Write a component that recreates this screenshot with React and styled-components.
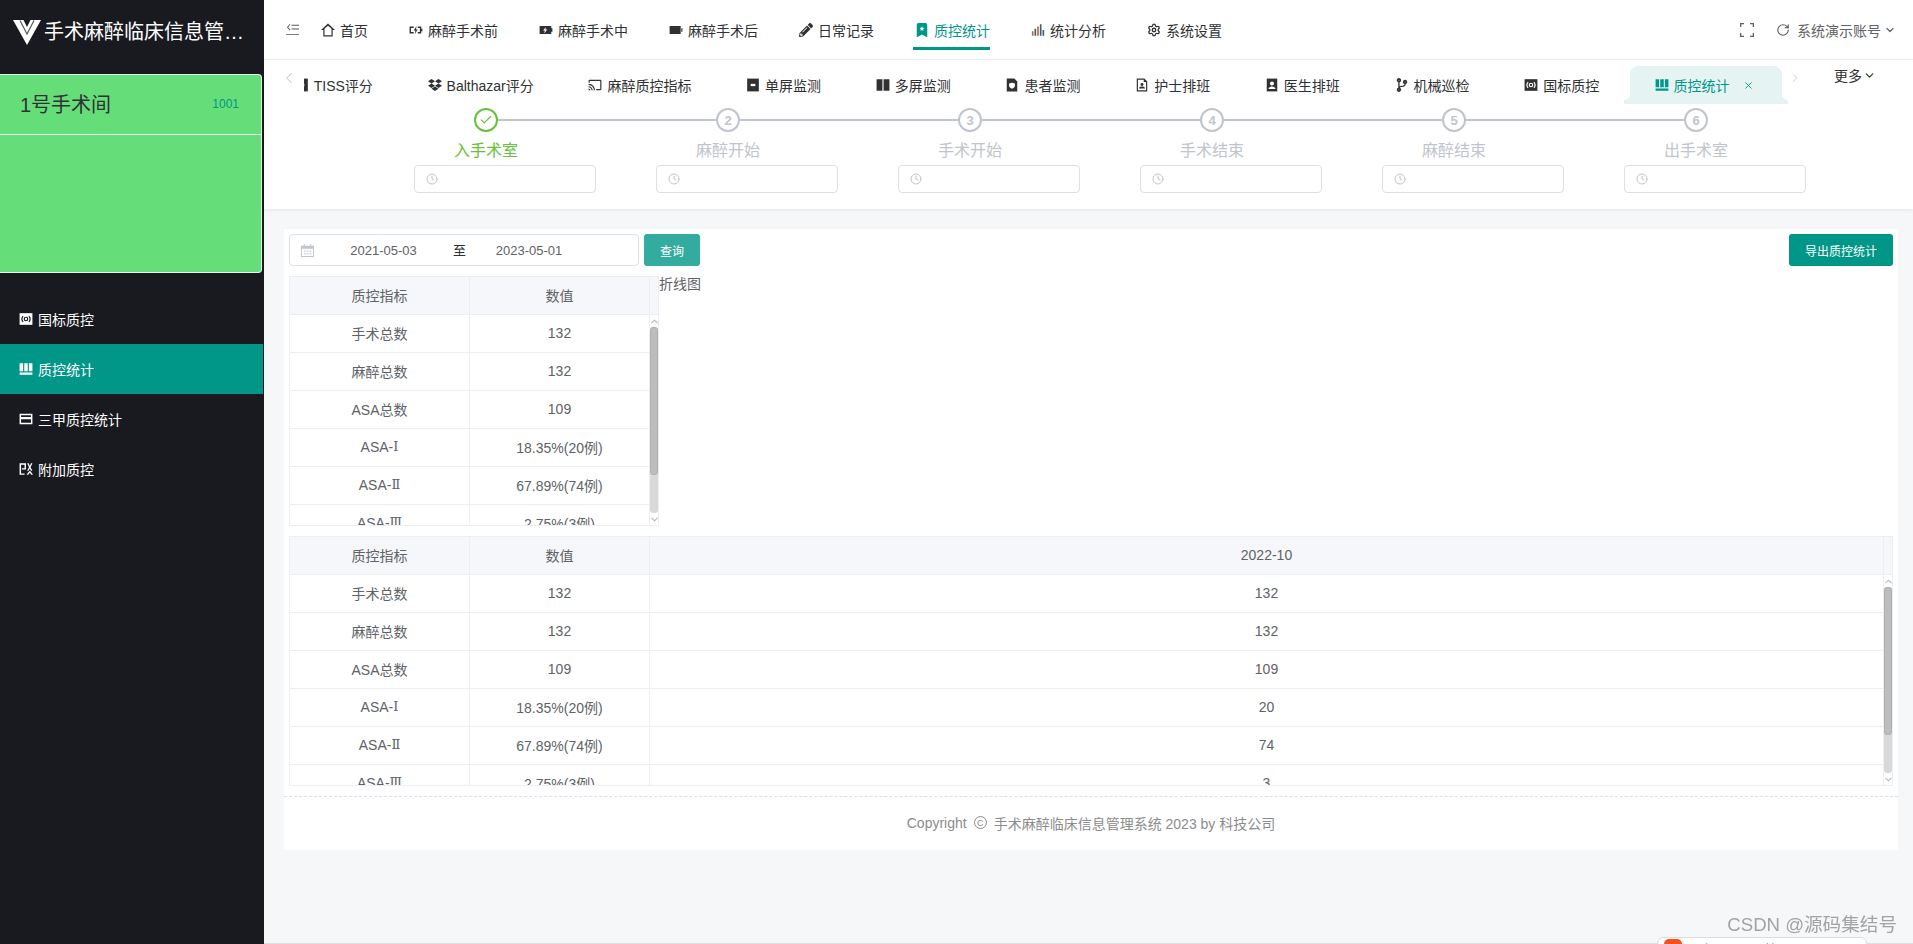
import React from "react";
import styled, { createGlobalStyle } from "styled-components";
import { MdCast } from "react-icons/md";
import { FaDropbox, FaCodeBranch, FaPencilAlt } from "react-icons/fa";
import { BsBookmarkStarFill } from "react-icons/bs";
import { Check, ChevronDown, ChevronLeft, ChevronRight, ChevronUp, Clock, RotateCw, Settings, X } from "lucide-react";

const GlobalStyle = createGlobalStyle`
  html, body {
    margin: 0;
    height: 100%;
    overflow: hidden;
    font-family: "Liberation Sans", "Noto Sans CJK SC", sans-serif;
    font-size: 14px;
    color: #303133;
  }
`;

const Svg = styled.svg`
  width: ${(p) => p.$size || 14}px;
  height: ${(p) => p.$size || 14}px;
  flex: none;
  fill: currentColor;
`;

const HomeLine = () => (
  <Svg viewBox="0 0 24 24">
    <path fillRule="evenodd" d="M12 1L0 12h4v11h16V12h4zM12 4.500l6 5.500v11H6V10z" />
  </Svg>
);
const BatteryLine = () => (
  <Svg viewBox="0 0 24 24">
    <path d="M1 6h7v2.400H3.400v7.200H8V18H1zM15 6h6v4h2v4h-2v4h-6v-2.400h3.600V8.400H15z" />
    <path d="M13 5l-5 8h3l-1 6 5-8h-3z" />
  </Svg>
);
const BatteryFill = () => (
  <Svg viewBox="0 0 24 24">
    <path d="M1 5h20v4h2v6h-2v4H1z" />
    <path fill="#fff" d="M12 7l-5 6h3l-1 5 5-7h-3z" />
  </Svg>
);
const VideoBar = () => (
  <Svg viewBox="0 0 24 24">
    <path d="M1 5h19v14H1zM21 9h2v6h-2z" />
  </Svg>
);
const BarsChart = () => (
  <Svg viewBox="0 0 24 24">
    <path fill="#a8733a" d="M1.500 14h2.800v8H1.500zM10.600 6h2.800v16h-2.800z" />
    <path fill="#3f5b78" d="M6 10h2.800v12H6zM15.200 2h2.800v20h-2.800zM19.800 12h2.800v10h-2.800z" />
  </Svg>
);
const Collapse = () => (
  <Svg viewBox="0 0 14 14" $size={13}>
    <path d="M0 12h14v1H0zM6 2h8v1H6zM6 6h8v1H6zM4 1L1 4.500 4 8l.7-.6L2.300 4.500 4.700 1.600z" />
  </Svg>
);
const Corners = () => (
  <Svg viewBox="0 0 14 14" $size={14}>
    <path d="M0 0h4v1.300H1.300V4H0zM10 0h4v4h-1.300V1.300H10zM0 10h1.300v2.700H4V14H0zM12.700 10H14v4h-4v-1.300h2.700z" />
  </Svg>
);
const DocFill = () => (
  <Svg viewBox="0 0 24 24">
    <path d="M2 1h20v22H2z" />
    <path fill="#fff" d="M8 10h8v4H8z" />
  </Svg>
);
const BookFill = () => (
  <Svg viewBox="0 0 24 24">
    <path d="M1 2h10v20H1zM13 2h10v20H13z" />
  </Svg>
);
const ShieldDoc = () => (
  <Svg viewBox="0 0 24 24">
    <path d="M3 1h13l5 5v17H3z" />
    <path fill="#fff" d="M12 8l5 1.500v3.500c0 3-2.500 4.500-5 5.500-2.500-1-5-2.500-5-5.500V9.500z" />
  </Svg>
);
const PersonDoc = () => (
  <Svg viewBox="0 0 24 24">
    <path d="M3 1h13l5 5v17H3zm2 2v18h14V7h-4V3z" />
    <circle cx="12" cy="11" r="2.500" />
    <path d="M7 18c0-2.500 2.500-3.500 5-3.500s5 1 5 3.500z" />
  </Svg>
);
const PersonFill = () => (
  <Svg viewBox="0 0 24 24">
    <path d="M3 1h18v22H3z" />
    <circle fill="#fff" cx="12" cy="9.500" r="3.500" />
    <path fill="#fff" d="M6 19c0-3 3-4.500 6-4.500s6 1.500 6 4.500z" />
  </Svg>
);
const RadioFill = ({ inner = "#fff" }) => (
  <Svg viewBox="0 0 24 24">
    <path d="M1 2h22v20H1z" />
    <circle cx="12" cy="12" r="3" fill="none" stroke={inner} strokeWidth="2" />
    <path fill="none" stroke={inner} strokeWidth="2" d="M7 7c-2.500 3-2.500 7 0 10M17 7c2.500 3 2.500 7 0 10" />
  </Svg>
);
const WeekBars = () => (
  <Svg viewBox="0 0 24 24">
    <path d="M1 2h6v14H1zM9 2h6v14H9zM17 2h6v14h-6zM1 18h22v4H1z" />
  </Svg>
);
const CardLine = () => (
  <Svg viewBox="0 0 24 24">
    <path d="M1 3h22v18H1zm2.500 2.500v3h17v-3zm0 7v6h17v-6z" />
  </Svg>
);
const ExtraMark = () => (
  <Svg viewBox="0 0 24 24">
    <path d="M1 2h11v11H5v-2.500h4.500v-6h-6v15h6V22H1zM14 2h2.500l2 5 2-5H23l-3.200 7 3.200 6h-2.500l-2-4-2 4H14l3.200-6zM13 22l4.200-6h2.600L24 22h-2.800l-2.700-3.500-2.700 3.500z" />
  </Svg>
);
const CalendarMark = () => (
  <Svg viewBox="0 0 14 14" $size={13}>
    <path d="M3 0h1v2h6V0h1v2h3v12H0V2h3zM1 5v8h12V5zM3 7h2v1H3zM6 7h2v1H6zM9 7h2v1H9zM3 10h2v1H3zM6 10h2v1H6zM9 10h2v1H9z" />
  </Svg>
);
const LogoMark = () => (
  <svg width="28" height="25" viewBox="0 0 28 25">
    <polygon fill="#fff" points="0,0 28,0 14,25" />
    <polyline fill="none" stroke="#55565c" strokeWidth="1.2" points="7,0.500 14,14 21,0.500" />
    <polygon fill="#191a20" points="10.500,0 17.500,0 14,7" />
  </svg>
);

const Page = styled.div`
  display: flex;
  height: 100vh;
  overflow: hidden;
`;

const Sidebar = styled.aside`
  width: 264px;
  flex: none;
  background: #191a20;
`;

const Brand = styled.div`
  height: 74px;
  box-sizing: border-box;
  padding: 20px 0 0 13px;
  display: flex;
  align-items: flex-start;
  gap: 3px;
`;

const BrandTitle = styled.div`
  width: 203px;
  font-size: 20px;
  line-height: 24px;
  color: #fff;
  white-space: nowrap;
  overflow: hidden;
  text-overflow: ellipsis;
`;

const RoomCard = styled.div`
  width: 262px;
  height: 199px;
  box-sizing: border-box;
  background: #65de7a;
  border: 1px solid #e8f5ea;
  border-left: none;
  border-radius: 0 4px 4px 0;
`;

const RoomHead = styled.div`
  height: 60px;
  box-sizing: border-box;
  padding: 0 22px 2px 20px;
  border-bottom: 1px solid #e8f5ea;
  display: flex;
  align-items: center;
  justify-content: space-between;
`;

const RoomName = styled.span`
  font-size: 20px;
  color: #303133;
`;

const RoomCode = styled.span`
  font-size: 12px;
  color: #009688;
`;

const SideMenu = styled.nav`
  margin-top: 21px;
`;

const SideItem = styled.div`
  height: 50px;
  margin-right: 1px;
  padding-left: 19px;
  display: flex;
  align-items: center;
  gap: 5px;
  color: #fff;
  background: ${(p) => (p.$active ? "#009688" : "transparent")};
`;

const Content = styled.div`
  flex: 1;
  min-width: 0;
  display: flex;
  flex-direction: column;
  background: #f6f7f9;
  border-bottom: 1px solid #dedede;
`;

const TopBar = styled.header`
  height: 60px;
  box-sizing: border-box;
  flex: none;
  background: #fff;
  border-bottom: 1px solid #f0f0f0;
  padding: 0 17px 0 22px;
  display: flex;
  align-items: flex-start;
`;

const CollapseButton = styled.div`
  height: 50px;
  width: 33px;
  display: flex;
  align-items: center;
  padding-top: 9px;
  box-sizing: border-box;
  color: #555;
`;

const NavList = styled.nav`
  display: flex;
  gap: 39px;
  flex: 1;
`;

const NavItem = styled.div`
  height: 50px;
  box-sizing: border-box;
  padding: 13px 0 0 2px;
  border-bottom: 3px solid ${(p) => (p.$active ? "#009688" : "transparent")};
  display: flex;
  align-items: center;
  gap: 5px;
  color: ${(p) => (p.$active ? "#009688" : "#303133")};
`;

const UserArea = styled.div`
  height: 60px;
  display: flex;
  align-items: center;
  color: #606266;
`;

const AccountName = styled.span`
  margin: 0 3px 0 7px;
`;

const UserGap = styled.span`
  width: 22px;
`;

const TabsPanel = styled.section`
  flex: none;
  background: #fff;
  box-shadow: 0 1px 4px rgba(0, 21, 41, 0.08);
`;

const TabsRow = styled.div`
  height: 44px;
  display: flex;
  align-items: flex-start;
  padding-left: 20px;
`;

const TabArrow = styled.div`
  width: ${(p) => p.$width}px;
  flex: none;
  margin-top: 9px;
  color: #a8abb2;
  display: flex;
  justify-content: ${(p) => p.$justify};
`;

const TabViewport = styled.div`
  width: 1484px;
  height: 44px;
  flex: none;
  overflow: hidden;
`;

const TabTrack = styled.div`
  display: flex;
  padding-top: 6px;
  margin-left: -36.600px;
`;

const Tab = styled.div`
  height: 38px;
  flex: none;
  padding: 0 27.350px;
  display: flex;
  align-items: center;
  gap: 5px;
  white-space: nowrap;
  color: #303133;
`;

const ActiveTab = styled(Tab)`
  position: relative;
  margin-left: 3px;
  padding: 0 28px 0 25px;
  color: #009688;
  background: #e5f4f3;
  border-radius: 8px 8px 0 0;
  &::before,
  &::after {
    content: "";
    position: absolute;
    bottom: 0;
    width: 6px;
    height: 10px;
  }
  &::before {
    left: -6px;
    background: radial-gradient(circle at 0 0, transparent 6px, #e5f4f3 6.500px);
  }
  &::after {
    right: -6px;
    background: radial-gradient(circle at 100% 0, transparent 6px, #e5f4f3 6.500px);
  }
`;

const TabClose = styled.span`
  display: flex;
  margin-left: 8px;
`;

const MoreMenu = styled.div`
  margin: 5px 0 0 32px;
  display: flex;
  align-items: center;
  gap: 1px;
  color: #303133;
`;

const Steps = styled.div`
  display: flex;
  padding: 4px 0 16px 101px;
`;

const Step = styled.div`
  width: 242px;
  flex: none;
  display: flex;
  flex-direction: column;
  align-items: center;
`;

const StepHead = styled.div`
  width: 100%;
  display: flex;
  align-items: center;
`;

const StepLine = styled.div`
  flex: 1;
  height: 2px;
  background: ${(p) => (p.$hidden ? "transparent" : "#c0c4cc")};
`;

const StepCircle = styled.div`
  width: 24px;
  height: 24px;
  box-sizing: border-box;
  border: 2px solid ${(p) => (p.$done ? "#67c23a" : "#c0c4cc")};
  border-radius: 50%;
  color: ${(p) => (p.$done ? "#67c23a" : "#c0c4cc")};
  display: flex;
  align-items: center;
  justify-content: center;
  font-size: 13px;
  font-weight: 700;
`;

const StepLabel = styled.div`
  margin-top: 7px;
  font-size: 16px;
  line-height: 24px;
  color: ${(p) => (p.$done ? "#67c23a" : "#c0c4cc")};
`;

const TimeInput = styled.div`
  width: 182px;
  height: 28px;
  box-sizing: border-box;
  margin: 2px 0 0 48.500px;
  align-self: flex-start;
  padding-left: 11px;
  border: 1px solid #dcdfe6;
  border-radius: 4px;
  display: flex;
  align-items: center;
  color: #c0c4cc;
`;

const MainCard = styled.main`
  margin: 20px 15px 0 20px;
  height: 621px;
  box-sizing: border-box;
  background: #fff;
  padding: 5px 5px 0;
`;

const Toolbar = styled.div`
  display: flex;
  align-items: center;
  justify-content: space-between;
  height: 32px;
`;

const QueryGroup = styled.div`
  display: flex;
  gap: 5px;
`;

const DateRange = styled.div`
  width: 350px;
  height: 32px;
  box-sizing: border-box;
  border: 1px solid #dcdfe6;
  border-radius: 4px;
  padding-left: 11px;
  display: flex;
  align-items: center;
  color: #c0c4cc;
`;

const DateValue = styled.span`
  width: ${(p) => p.$width}px;
  text-align: center;
  font-size: 13px;
  color: #606266;
`;

const DateSeparator = styled.span`
  font-size: 13px;
  margin-top: -2px;
  color: #303133;
`;

const FilledButton = styled.button`
  height: 32px;
  padding: 0 ${(p) => p.$pad}px;
  border: none;
  border-radius: 3px;
  background: ${(p) => (p.$soft ? "#33ab9f" : "#009688")};
  color: #fff;
  font: inherit;
  font-size: 12px;
`;

const TableRow = styled.div`
  display: flex;
  margin-top: 10px;
  height: 250px;
`;

const ChartTitle = styled.div`
  line-height: 16px;
  color: #606266;
`;

const TableBox = styled.div`
  flex: none;
  width: ${(p) => p.$width}px;
  height: 250px;
  box-sizing: border-box;
  border: 1px solid #ebeef5;
  overflow: hidden;
  color: #606266;
`;

const TableLine = styled.div`
  display: grid;
  grid-template-columns: ${(p) => p.$cols};
  height: 38px;
  background: ${(p) => (p.$head ? "#f5f7fa" : "#fff")};
`;

const TableCell = styled.div`
  box-sizing: border-box;
  padding-bottom: 2px;
  display: flex;
  align-items: center;
  justify-content: center;
  border-right: 1px solid #ebeef5;
  border-bottom: 1px solid #ebeef5;
  white-space: nowrap;
`;

const TableHeadEnd = styled.div`
  border-bottom: 1px solid #ebeef5;
`;

const TableBody = styled.div`
  display: flex;
  height: 210px;
`;

const TableRows = styled.div`
  flex: 1;
  min-width: 0;
  overflow: hidden;
`;

const ScrollGutter = styled.div`
  width: 8px;
  flex: none;
  display: flex;
  flex-direction: column;
  align-items: center;
  color: #bbb;
`;

const ScrollArrow = styled.div`
  height: 12px;
  display: flex;
  align-items: center;
`;

const ScrollTrack = styled.div`
  height: 186px;
  width: 100%;
  background: #d9d9d9;
  border-radius: 3px;
`;

const ScrollThumb = styled.div`
  height: 148px;
  box-sizing: border-box;
  background: #bdbdbd;
  border: 1px solid #b0b0b0;
  border-radius: 3px;
`;

const RomanNumeral = styled.span`
  font-family: "DejaVu Serif", "Noto Sans CJK SC", serif;
  font-size: 13px;
`;

const FooterBar = styled.footer`
  margin: 10px -5px 0;
  border-top: 1px dashed #dcdfe6;
  height: 54px;
  box-sizing: border-box;
  padding-bottom: 2px;
  display: flex;
  align-items: center;
  justify-content: center;
  gap: 4px;
  color: #8c8c8c;
`;

const CopyMark = styled.span`
  width: 11px;
  height: 11px;
  border: 1px solid #8c8c8c;
  border-radius: 50%;
  display: flex;
  align-items: center;
  justify-content: center;
  font-size: 9px;
  margin: 0 3px;
`;

const Watermark = styled.div`
  position: fixed;
  right: 16px;
  bottom: 7px;
  font-size: 18.600px;
  line-height: 24px;
  color: #a3a3a3;
`;

const ToolbarPopup = styled.div`
  position: fixed;
  left: 1657px;
  top: 937px;
  width: 210px;
  height: 30px;
  box-sizing: border-box;
  background: #fff;
  border: 1px solid #dcdcdc;
  border-radius: 6px;
  padding: 1px 6px;
  display: flex;
  gap: 18px;
  font-size: 14px;
  color: #4a9de0;
`;

const PopupLogo = styled.span`
  width: 18px;
  height: 18px;
  border-radius: 5px;
  background: #f4511e;
`;

const navItems = [
  [<HomeLine />, "首页"],
  [<BatteryLine />, "麻醉手术前"],
  [<BatteryFill />, "麻醉手术中"],
  [<VideoBar />, "麻醉手术后"],
  [<FaPencilAlt size={14} />, "日常记录"],
  [<BsBookmarkStarFill size={14} />, "质控统计", true],
  [<BarsChart />, "统计分析"],
  [<Settings size={14} strokeWidth={2.2} />, "系统设置"],
];

const tabItems = [
  [<DocFill />, "TISS评分"],
  [<FaDropbox size={14} />, "Balthazar评分"],
  [<MdCast size={14} />, "麻醉质控指标"],
  [<DocFill />, "单屏监测"],
  [<BookFill />, "多屏监测"],
  [<ShieldDoc />, "患者监测"],
  [<PersonDoc />, "护士排班"],
  [<PersonFill />, "医生排班"],
  [<FaCodeBranch size={14} />, "机械巡检"],
  [<RadioFill />, "国标质控"],
];

const sideItems = [
  [<RadioFill inner="#191a20" />, "国标质控"],
  [<WeekBars />, "质控统计", true],
  [<CardLine />, "三甲质控统计"],
  [<ExtraMark />, "附加质控"],
];

const stepNames = ["入手术室", "麻醉开始", "手术开始", "手术结束", "麻醉结束", "出手术室"];

const statRows = [
  ["手术总数", "132", "132"],
  ["麻醉总数", "132", "132"],
  ["ASA总数", "109", "109"],
  [<>ASA-<RomanNumeral>Ⅰ</RomanNumeral></>, "18.35%(20例)", "20"],
  [<>ASA-<RomanNumeral>Ⅱ</RomanNumeral></>, "67.89%(74例)", "74"],
  [<>ASA-<RomanNumeral>Ⅲ</RomanNumeral></>, "2.75%(3例)", "3"],
];

const StatTable = ({ width, month }) => {
  const headCols = month ? "180px 180px 1fr 8px" : "180px 180px 8px";
  const rowCols = month ? "180px 180px 1fr" : "180px 180px";
  return (
    <TableBox $width={width}>
      <TableLine $head $cols={headCols}>
        <TableCell>质控指标</TableCell>
        <TableCell>数值</TableCell>
        {month && <TableCell>{month}</TableCell>}
        <TableHeadEnd />
      </TableLine>
      <TableBody>
        <TableRows>
          {statRows.map((row) => (
            <TableLine key={row[1]} $cols={rowCols}>
              <TableCell>{row[0]}</TableCell>
              <TableCell>{row[1]}</TableCell>
              {month && <TableCell>{row[2]}</TableCell>}
            </TableLine>
          ))}
        </TableRows>
        <ScrollGutter>
          <ScrollArrow>
            <ChevronUp size={11} strokeWidth={2.5} />
          </ScrollArrow>
          <ScrollTrack>
            <ScrollThumb />
          </ScrollTrack>
          <ScrollArrow>
            <ChevronDown size={11} strokeWidth={2.5} />
          </ScrollArrow>
        </ScrollGutter>
      </TableBody>
    </TableBox>
  );
};

export default function App() {
  return (
    <Page>
      <GlobalStyle />
      <Sidebar>
        <Brand>
          <LogoMark />
          <BrandTitle>手术麻醉临床信息管理系统</BrandTitle>
        </Brand>
        <RoomCard>
          <RoomHead>
            <RoomName>1号手术间</RoomName>
            <RoomCode>1001</RoomCode>
          </RoomHead>
        </RoomCard>
        <SideMenu>
          {sideItems.map(([icon, label, active]) => (
            <SideItem key={label} $active={active}>
              {icon}
              {label}
            </SideItem>
          ))}
        </SideMenu>
      </Sidebar>
      <Content>
        <TopBar>
          <CollapseButton>
            <Collapse />
          </CollapseButton>
          <NavList>
            {navItems.map(([icon, label, active]) => (
              <NavItem key={label} $active={active}>
                {icon}
                {label}
              </NavItem>
            ))}
          </NavList>
          <UserArea>
            <Corners />
            <UserGap />
            <RotateCw size={14} />
            <AccountName>系统演示账号</AccountName>
            <ChevronDown size={12} strokeWidth={2.4} />
          </UserArea>
        </TopBar>
        <TabsPanel>
          <TabsRow>
            <TabArrow $width={20} $justify="flex-start">
              <ChevronLeft size={18} strokeWidth={1} style={{ marginLeft: -4 }} />
            </TabArrow>
            <TabViewport>
              <TabTrack>
                {tabItems.map(([icon, label]) => (
                  <Tab key={label}>
                    {icon}
                    {label}
                  </Tab>
                ))}
                <ActiveTab>
                  <WeekBars />
                  质控统计
                  <TabClose>
                    <X size={11} />
                  </TabClose>
                </ActiveTab>
              </TabTrack>
            </TabViewport>
            <TabArrow $width={14} $justify="flex-end">
              <ChevronRight size={18} strokeWidth={1} />
            </TabArrow>
            <MoreMenu>
              更多
              <ChevronDown size={13} strokeWidth={2.2} />
            </MoreMenu>
          </TabsRow>
          <Steps>
            {stepNames.map((name, i) => (
              <Step key={name}>
                <StepHead>
                  <StepLine $hidden={i === 0} />
                  <StepCircle $done={i === 0}>{i === 0 ? <Check size={14} /> : i + 1}</StepCircle>
                  <StepLine $hidden={i === stepNames.length - 1} />
                </StepHead>
                <StepLabel $done={i === 0}>{name}</StepLabel>
                <TimeInput>
                  <Clock size={12} />
                </TimeInput>
              </Step>
            ))}
          </Steps>
        </TabsPanel>
        <MainCard>
          <Toolbar>
            <QueryGroup>
              <DateRange>
                <CalendarMark />
                <DateValue $width={139}>2021-05-03</DateValue>
                <DateSeparator>至</DateSeparator>
                <DateValue $width={126}>2023-05-01</DateValue>
              </DateRange>
              <FilledButton $soft $pad={16}>
                查询
              </FilledButton>
            </QueryGroup>
            <FilledButton $pad={16}>导出质控统计</FilledButton>
          </Toolbar>
          <TableRow>
            <StatTable width={370} />
            <ChartTitle>折线图</ChartTitle>
          </TableRow>
          <TableRow>
            <StatTable width={1604} month="2022-10" />
          </TableRow>
          <FooterBar>
            Copyright
            <CopyMark>C</CopyMark>
            手术麻醉临床信息管理系统 2023 by 科技公司
          </FooterBar>
        </MainCard>
      </Content>
      <Watermark>CSDN @源码集结号</Watermark>
      <ToolbarPopup>
        <PopupLogo />
        <span>上</span>
        <span>下</span>
        <span>第</span>
        <span>页</span>
      </ToolbarPopup>
    </Page>
  );
}
